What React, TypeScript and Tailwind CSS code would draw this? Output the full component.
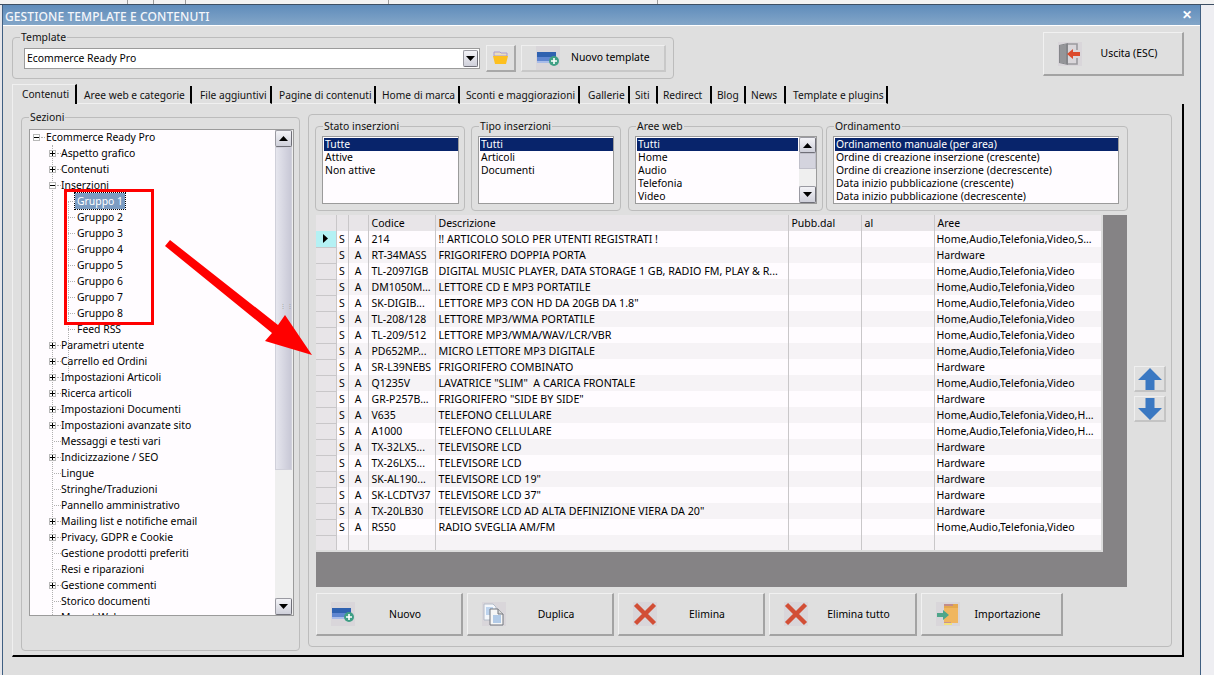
import React from "react";

const F = "font-['Noto_Sans',sans-serif]";

const tree: [string, number, string][] = [
  ["Ecommerce Ready Pro", 0, "-"],
  ["Aspetto grafico", 1, "+"],
  ["Contenuti", 1, "+"],
  ["Inserzioni", 1, "-"],
  ["Gruppo 1", 2, ""],
  ["Gruppo 2", 2, ""],
  ["Gruppo 3", 2, ""],
  ["Gruppo 4", 2, ""],
  ["Gruppo 5", 2, ""],
  ["Gruppo 6", 2, ""],
  ["Gruppo 7", 2, ""],
  ["Gruppo 8", 2, ""],
  ["Feed RSS", 2, ""],
  ["Parametri utente", 1, "+"],
  ["Carrello ed Ordini", 1, "+"],
  ["Impostazioni Articoli", 1, "+"],
  ["Ricerca articoli", 1, "+"],
  ["Impostazioni Documenti", 1, "+"],
  ["Impostazioni avanzate sito", 1, "+"],
  ["Messaggi e testi vari", 1, ""],
  ["Indicizzazione / SEO", 1, "+"],
  ["Lingue", 1, ""],
  ["Stringhe/Traduzioni", 1, ""],
  ["Pannello amministrativo", 1, ""],
  ["Mailing list e notifiche email", 1, "+"],
  ["Privacy, GDPR e Cookie", 1, "+"],
  ["Gestione prodotti preferiti", 1, ""],
  ["Resi e riparazioni", 1, ""],
  ["Gestione commenti", 1, "+"],
  ["Storico documenti", 1, ""],
  ["Menu t Web", 1, ""],
];

const tabs: [string, number, number][] = [
  ["Contenuti", 65, 9],
  ["Aree web e categorie", 115, 7],
  ["File aggiuntivi", 80, 8],
  ["Pagine di contenuti", 104, 7],
  ["Home di marca", 84, 6],
  ["Sconti e maggiorazioni", 120, 6],
  ["Gallerie", 50, 8],
  ["Siti", 28, 5],
  ["Redirect", 54, 5],
  ["Blog", 34, 5],
  ["News", 40, 5],
  ["Template e plugins", 102, 7],
];

const H = "Home,Audio,Telefonia,Video";
const rows: [string, string, string][] = [
  ["214", "!! ARTICOLO SOLO PER UTENTI REGISTRATI !", "Home,Audio,Telefonia,Video,S..."],
  ["RT-34MASS", "FRIGORIFERO DOPPIA PORTA", "Hardware"],
  ["TL-2097IGB", "DIGITAL MUSIC PLAYER, DATA STORAGE 1 GB, RADIO FM, PLAY & R...", H],
  ["DM1050M...", "LETTORE CD E MP3 PORTATILE", H],
  ["SK-DIGIB...", 'LETTORE MP3 CON HD DA 20GB DA 1.8"', H],
  ["TL-208/128", "LETTORE MP3/WMA PORTATILE", H],
  ["TL-209/512", "LETTORE MP3/WMA/WAV/LCR/VBR", H],
  ["PD652MP...", "MICRO LETTORE MP3 DIGITALE", H],
  ["SR-L39NEBS", "FRIGORIFERO COMBINATO", "Hardware"],
  ["Q1235V", 'LAVATRICE "SLIM"  A CARICA FRONTALE', H],
  ["GR-P257B...", 'FRIGORIFERO "SIDE BY SIDE"', "Hardware"],
  ["V635", "TELEFONO CELLULARE", "Home,Audio,Telefonia,Video,H..."],
  ["A1000", "TELEFONO CELLULARE", "Home,Audio,Telefonia,Video,H..."],
  ["TX-32LX5...", "TELEVISORE LCD", "Hardware"],
  ["TX-26LX5...", "TELEVISORE LCD", "Hardware"],
  ["SK-AL190...", 'TELEVISORE LCD 19"', "Hardware"],
  ["SK-LCDTV37", 'TELEVISORE LCD 37"', "Hardware"],
  ["TX-20LB30", 'TELEVISORE LCD AD ALTA DEFINIZIONE VIERA DA 20"', "Hardware"],
  ["RS50", "RADIO SVEGLIA AM/FM", H],
  ["", "", ""],
];

const NewIcon = () => (
  <svg width="24" height="24" viewBox="0 0 24 24" className="shrink-0">
    <rect width="24" height="24" fill="#d9d6da" />
    <rect x="1" y="6" width="19" height="5" fill="#2f62b0" />
    <rect x="1" y="11" width="19" height="4" fill="#5f86d0" />
    <rect x="1" y="15" width="17" height="2" fill="#a9bce8" />
    <circle cx="18" cy="15" r="5" fill="#3f9f85" />
    <path d="M18 12v6M15 15h6" stroke="#fff" strokeWidth="1.6" />
  </svg>
);
const XIcon = () => (
  <svg width="24" height="24" viewBox="0 0 24 24" className="shrink-0">
    <rect width="24" height="24" fill="#d9d6da" />
    <path d="M2.500 2.500 21.500 21.500M21.500 2.500 2.500 21.500" stroke="#d24f36" strokeWidth="4.400" />
  </svg>
);
const DupIcon = () => (
  <svg width="24" height="24" viewBox="0 0 24 24" className="shrink-0">
    <rect width="24" height="24" fill="#d9d6da" />
    <path d="M2 2h9l3 3v13H2z" fill="#f4f7fb" stroke="#b4bcc8" />
    <path d="M4 6h7M4 8h7M4 10h7M4 12h7" stroke="#86b0e0" />
    <path d="M8 7h8l5 5v11H8z" fill="#f6f6f6" stroke="#70757c" />
    <path d="M16 7v5h5" fill="#d8d8d8" stroke="#70757c" />
    <path d="M11 14h8M11 16h8M11 18h8M11 20h8" stroke="#6f9fd8" />
  </svg>
);
const ImportIcon = () => (
  <svg width="24" height="24" viewBox="0 0 24 24" className="shrink-0">
    <rect width="24" height="24" fill="#d9d6da" />
    <path d="M8 2h14v19H8z" fill="#f0b65f" />
    <path d="M8 2h14v4H8z" fill="#e4a84e" />
    <path d="M8 3h9M8 21h7" stroke="#a070c8" />
    <path d="M8 22h8" stroke="#f3e27a" strokeWidth="2" />
    <path d="M1 11h6V8l6 5-6 5v-3H1z" fill="#4fa68a" />
  </svg>
);
const ExitIcon = () => (
  <svg width="24" height="24" viewBox="0 0 24 24" className="shrink-0">
    <rect width="24" height="24" fill="#d9d6da" />
    <path d="M1 3 10 1v22L1 21z" fill="#85868a" />
    <path d="M3 3v18M5 3v18M7 2v20" stroke="#a4a5a8" />
    <path d="M10 2h9v6M19 16v6h-9" fill="none" stroke="#9a9a9e" strokeWidth="1.600" />
    <path d="M9 12l6-5v3h7v4h-7v3z" fill="#dc4a2c" />
  </svg>
);
const Folder = () => (
  <svg width="16" height="14" viewBox="0 0 16 14">
    <path d="M1 1h6l1 1h6v3H1z" fill="#e9dcc0" stroke="#a99bd0" />
    <path d="M1 5h14l-2 8H2L0 5z" fill="#fdc020" />
  </svg>
);
const Up = () => (
  <svg width="24" height="22" viewBox="0 0 24 22">
    <path d="M12 0 24 12h-7.500v10h-9V12H0z" fill="#3a78c2" />
  </svg>
);
const Down = () => (
  <svg width="24" height="22" viewBox="0 0 24 22">
    <path d="M12 22 24 10h-7.500V0h-9v10H0z" fill="#3a78c2" />
  </svg>
);
const Tri = ({ up }: { up?: boolean }) => (
  <svg width="9" height="5" viewBox="0 0 9 5">
    <path d={up ? "M4.500 0 9 5H0z" : "M0 0h9L4.500 5z"} fill="#000" />
  </svg>
);
const ScrollBtn = ({ up, cls }: { up?: boolean; cls: string }) => (
  <div className={`flex items-center justify-center rounded-[2px] border border-[#9a9aa2] border-b-[#6f6f78] border-r-[#6f6f78] bg-gradient-to-b from-[#f3f3f7] to-[#cfd0da] ${cls}`}>
    <Tri up={up} />
  </div>
);

const Group = ({ label, cls, children }: { label: string; cls: string; children?: React.ReactNode }) => (
  <div className={`relative rounded-[4px] border border-[#bcbcbc] ${cls}`}>
    <span className="absolute -top-[8px] left-[7px] bg-[#dfdfdf] px-px text-[10.4px] leading-[14px] text-[#111]">{label}</span>
    {children}
  </div>
);

const ListBox = ({ items, cls }: { items: string[]; cls: string }) => (
  <div className={`overflow-hidden border border-[#9b9b9b] bg-[#fffcff] py-px pl-px text-[10.4px] leading-[13px] text-black ${cls}`}>
    {items.map((t, i) => (
      <div key={t} className={`h-[13px] whitespace-nowrap pl-[1px] ${i === 0 ? "bg-[#08246b] text-white" : ""}`}>{t}</div>
    ))}
  </div>
);

const Btn = ({ w, icon, label, h = "h-[43px]" }: { w: string; icon: React.ReactNode; label: string; h?: string }) => (
  <div className={`relative flex shrink-0 items-center ${w} ${h} border border-r-2 border-b-2 border-[#f1f1f1] border-r-[#a3a3a3] border-b-[#a3a3a3] bg-[#dfdfdf] pl-[14px] text-[10.4px] text-black`}>
    {icon}
    <span className="flex-1 pl-[7px] pr-[13px] pt-px text-center">{label}</span>
  </div>
);

export default function App() {
  return (
    <div className={`relative flex h-[675px] w-[1214px] flex-col overflow-hidden bg-[#e6e6ea] text-black ${F}`}>
      {/* strip of the window behind */}
      <div className="flex h-[5px] shrink-0 border-b border-[#3d4f63] bg-[#f2f2f2]">
        <div className="w-[128px] border-r border-[#9a9a9a]" />
        <div className="w-[26px] border-r border-[#9a9a9a]" />
        <div className="w-[32px] border-r border-[#9a9a9a]" />
        <div className="w-[203px] border-r border-[#9a9a9a]" />
        <div className="w-[269px] border-r border-[#9a9a9a]" />
      </div>

      <div className="flex min-h-0 flex-1">
        {/* window */}
        <div className="ml-[2px] flex w-[1199px] flex-col border-x border-[#3f5f82] bg-[#dfdfdf]">
          <div className="flex h-[21px] shrink-0 items-center justify-between border-b border-white bg-gradient-to-b from-[#5f8cbb] to-[#83a6c8] pl-[2px] pr-[8px] pt-[4px] text-[12px] font-medium text-[#f4f6fa]">
            <span className="tracking-[0.1px]">GESTIONE TEMPLATE E CONTENUTI</span>
            <span className="-mt-[4px] flex h-[10px] w-[10px] items-center justify-center text-[12px] font-bold leading-none text-white">✕</span>
          </div>

          {/* top zone */}
          <div className="relative flex h-[58px] shrink-0 items-start pl-[9px] pt-[11px]">
            <Group label="Template" cls="flex h-[42px] w-[662px] items-center pl-[11px]">
              <div className="flex h-[21px] w-[456px] items-center justify-between border border-[#9b9b9b] bg-white pl-[2px] pr-px text-[10.4px]">
                <span className="pt-px">Ecommerce Ready Pro</span>
                <ScrollBtn cls="h-[17px] w-[15px]" />
              </div>
              <div className="ml-[6px] flex h-[27px] w-[30px] items-center justify-center border border-r-2 border-b-2 border-[#efefef] border-r-[#a8a8a8] border-b-[#a8a8a8]">
                <Folder />
              </div>
              <div className="ml-[5px] flex h-[27px] w-[145px] items-center border border-r-2 border-b-2 border-[#efefef] border-r-[#c8c8c8] border-b-[#c8c8c8] pl-[14px] text-[10.4px]">
                <NewIcon />
                <span className="ml-[11px] pt-px">Nuovo template</span>
              </div>
            </Group>
            <div className="ml-[369px] -mt-[5px]">
              <Btn w="w-[141px]" h="h-[44px]" icon={<ExitIcon />} label="Uscita (ESC)" />
            </div>
          </div>

          {/* tabs */}
          <div className="ml-[9px] flex h-[20px] shrink-0 items-end text-[10.2px] text-[#111]">
            {tabs.map(([t, w, p], i) => (
              <div key={t} style={{ width: w, paddingLeft: p }} className={`flex items-center whitespace-nowrap border-r-2 border-r-black ${i === 0 ? "h-[20px] border-l border-t border-[#f0f0f0] pt-[1px]" : "h-[18px] border-b border-b-[#f0f0f0] pt-[2px]"}`}>
                {t}
              </div>
            ))}
          </div>

          {/* tab page */}
          <div className="ml-[9px] flex h-[553px] w-[1172px] shrink-0 border-b-2 border-r-2 border-l border-b-black border-r-black border-l-[#f0f0f0] pl-[8px]">
            <Group label="Sezioni" cls="mt-[13px] h-[534px] w-[279px] shrink-0 pl-[7px] pt-[11px]">
              <div className="relative flex h-[487px] w-[265px] overflow-hidden border border-[#9b9b9b] bg-[#fffcff]">
                <div className="relative -mt-px flex-1 overflow-hidden pl-[3px] text-[10.4px] leading-[16px]">
                  <div className="absolute bottom-0 left-[22px] top-[16px] w-0 border-l border-dotted border-[#b0b0b0]" />
                  <div className="absolute left-[38px] top-[72px] h-[176px] w-0 border-l border-dotted border-[#b0b0b0]" />
                  {tree.map(([t, lvl, sign], i) => (
                    <div key={t} className="relative flex h-[16px] items-center whitespace-nowrap">
                      <div className={lvl === 0 ? "w-[13px]" : lvl === 1 ? "w-[28px]" : "w-[44px]"} />
                      {sign && (
                        <>
                          <span className={`absolute flex h-[7px] w-[7px] items-center justify-center border border-[#b8b8b8] bg-white ${lvl === 0 ? "left-[0px]" : "left-[16px]"}`}>
                            <span className="absolute h-px w-[5px] bg-black" />
                            {sign === "+" && <span className="absolute h-[5px] w-px bg-black" />}
                          </span>
                          <span className={`absolute h-0 w-[4px] border-t border-dotted border-[#b0b0b0] ${lvl === 0 ? "left-[8px]" : "left-[24px]"}`} />
                        </>
                      )}
                      {!sign && <span className={`absolute h-0 w-[7px] border-t border-dotted border-[#b0b0b0] ${lvl === 1 ? "left-[21px]" : "left-[35px]"}`} />}
                      <span className={i === 4 ? "-ml-[2px] bg-[#7b9cc2] px-[2px] text-white outline-1 outline-dotted outline-black" : ""}>{t}</span>
                    </div>
                  ))}
                </div>
                <div className="flex w-[18px] shrink-0 flex-col bg-[#efefef]">
                  <ScrollBtn up cls="h-[17px] w-[17px]" />
                  <div className="relative h-[323px] w-[17px] border border-[#d0d0da] bg-gradient-to-r from-[#e6e6ee] to-[#c8c8d6]">
                    <span className="absolute left-[4px] top-[156px] text-[6px] leading-[5px] tracking-[0.5px] text-[#9a9a9a]">⋮⋮</span>
                  </div>
                  <div className="flex-1" />
                  <ScrollBtn cls="h-[17px] w-[17px]" />
                </div>
              </div>
            </Group>

            <div className="relative ml-[8px] mt-[10px] h-[533px] w-[864px] shrink-0 rounded-[4px] border border-[#bcbcbc] pl-[6px]">
              <div className="mt-[11px] flex h-[85px] gap-[6px]">
                <Group label="Stato inserzioni" cls="h-[85px] w-[150px] pl-[6px] pt-[9px]">
                  <ListBox cls="h-[68px] w-[137px]" items={["Tutte", "Attive", "Non attive"]} />
                </Group>
                <Group label="Tipo inserzioni" cls="h-[85px] w-[150px] pl-[6px] pt-[9px]">
                  <ListBox cls="h-[68px] w-[136px]" items={["Tutti", "Articoli", "Documenti"]} />
                </Group>
                <Group label="Aree web" cls="ml-px h-[85px] w-[195px] pl-[6px] pt-[9px]">
                  <div className="relative h-[68px] w-[182px]">
                    <ListBox cls="h-[68px] w-[182px] pr-[18px]" items={["Tutti", "Home", "Audio", "Telefonia", "Video"]} />
                    <div className="absolute right-px top-px flex h-[66px] w-[17px] flex-col bg-[#efefef]">
                      <ScrollBtn up cls="h-[16px] w-[17px]" />
                      <div className="h-[16px] w-[17px] border border-[#c0c0ca] bg-[#d4d4de]" />
                      <div className="flex-1" />
                      <ScrollBtn cls="h-[17px] w-[17px]" />
                    </div>
                  </div>
                </Group>
                <Group label="Ordinamento" cls="-ml-[3px] h-[85px] w-[302px] pl-[6px] pt-[9px]">
                  <ListBox
                    cls="h-[68px] w-[286px]"
                    items={[
                      "Ordinamento manuale (per area)",
                      "Ordine di creazione inserzione (crescente)",
                      "Ordine di creazione inserzione (decrescente)",
                      "Data inizio pubblicazione (crescente)",
                      "Data inizio pubblicazione (decrescente)",
                    ]}
                  />
                </Group>
              </div>

              <div className="ml-px mt-[4px] flex h-[372px] w-[811px] items-start bg-[#858385]">
                <table className="w-[787px] table-fixed border-collapse border-b-2 border-r-2 border-[#dcdcdc] bg-[#fffcff] text-[10.5px]">
                  <colgroup>
                    <col className="w-[20px]" />
                    <col className="w-[12px]" />
                    <col className="w-[20px]" />
                    <col className="w-[67px]" />
                    <col className="w-[353px]" />
                    <col className="w-[73px]" />
                    <col className="w-[73px]" />
                    <col />
                  </colgroup>
                  <thead>
                    <tr className="h-[16px] bg-[#e8e5e8]">
                      {["", "", "", "Codice", "Descrizione", "Pubb.dal", "al", "Aree"].map((t, i) => (
                        <th key={i} className="overflow-hidden whitespace-nowrap border-r border-[#c9c7c9] p-0 pl-[3px] text-left font-normal leading-[15px]">{t}</th>
                      ))}
                    </tr>
                  </thead>
                  <tbody>
                    {rows.map((r, i) => (
                      <tr key={i} className={`h-[16px] ${i % 2 ? "bg-[#f6f3f6]" : "bg-[#fffcff]"}`}>
                        <td className={`border-b border-r border-[#c9c7c9] p-0 ${i === 0 ? "bg-[#b4f1f4]" : "bg-[#e8e5e8]"}`}>
                          {i === 0 && (
                            <svg width="20" height="15" viewBox="0 0 20 15">
                              <path d="M7 3l5 4.500-5 4.500z" fill="#000" />
                            </svg>
                          )}
                        </td>
                        <td className="border-r border-[#c9c7c9] p-0 text-center leading-[15px]">{r[0] ? "S" : ""}</td>
                        <td className="border-r border-[#c9c7c9] p-0 text-center leading-[15px]">{r[0] ? "A" : ""}</td>
                        <td className="overflow-hidden whitespace-nowrap border-r border-[#c9c7c9] p-0 pl-[3px] leading-[15px]">{r[0]}</td>
                        <td className="overflow-hidden whitespace-pre border-r border-[#c9c7c9] p-0 pl-[3px] text-[10.7px] leading-[15px]">{r[1]}</td>
                        <td className="border-r border-[#c9c7c9] p-0" />
                        <td className="border-r border-[#c9c7c9] p-0" />
                        <td className="overflow-hidden whitespace-nowrap p-0 pl-[2px] leading-[15px]">{r[2]}</td>
                      </tr>
                    ))}
                  </tbody>
                </table>
              </div>

              <div className="ml-px mt-[6px] flex gap-[4px]">
                <Btn w="w-[147px]" icon={<NewIcon />} label="Nuovo" />
                <Btn w="w-[147px]" icon={<DupIcon />} label="Duplica" />
                <Btn w="w-[147px]" icon={<XIcon />} label="Elimina" />
                <Btn w="w-[148px]" icon={<XIcon />} label="Elimina tutto" />
                <Btn w="w-[142px]" icon={<ImportIcon />} label="Importazione" />
              </div>

              {/* up / down side buttons */}
              <div className="absolute left-[825px] top-[251px] flex flex-col gap-[4px]">
                <div className="flex h-[26px] w-[32px] items-center justify-center border border-r-2 border-b-2 border-[#efefef] border-r-[#c4c4c4] border-b-[#c4c4c4]"><Up /></div>
                <div className="flex h-[26px] w-[32px] items-center justify-center border border-r-2 border-b-2 border-[#efefef] border-r-[#c4c4c4] border-b-[#c4c4c4]"><Down /></div>
              </div>
            </div>
          </div>
        </div>
        <div className="flex-1 bg-[#eeeef2]" />
      </div>

      {/* annotation over the screenshot */}
      <div className="absolute left-[64px] top-[189px] h-[136px] w-[90px] border-[3px] border-[#ff0000]" />
      <svg className="absolute left-0 top-0" width="1214" height="675" viewBox="0 0 1214 675">
        <path d="M170 240 L278 325 L285 315 L312 355 L265 341 L272 333 L165 246 Z" fill="#ff0000" />
      </svg>
    </div>
  );
}
